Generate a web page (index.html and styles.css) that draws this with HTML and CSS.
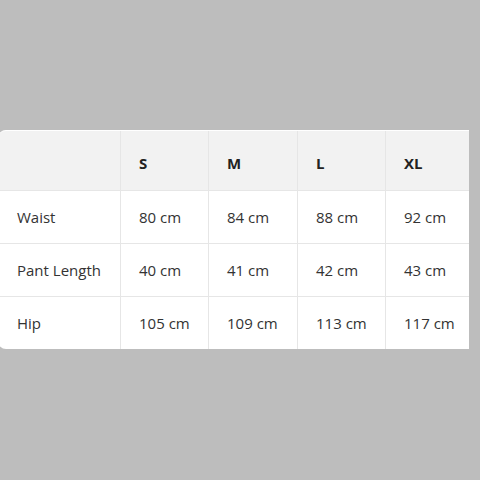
FILE: index.html
```html
<!DOCTYPE html>
<html lang="en">
<head>
<meta charset="utf-8">
<title>Size chart</title>
<link rel="stylesheet" href="styles.css">
</head>
<body>
<div class="card">
  <table class="size-table">
    <colgroup>
      <col class="c-label">
      <col class="c-s">
      <col class="c-m">
      <col class="c-l">
      <col class="c-xl">
    </colgroup>
    <thead>
      <tr>
        <th></th>
        <th>S</th>
        <th>M</th>
        <th>L</th>
        <th>XL</th>
      </tr>
    </thead>
    <tbody>
      <tr>
        <td>Waist</td>
        <td>80 cm</td>
        <td>84 cm</td>
        <td>88 cm</td>
        <td>92 cm</td>
      </tr>
      <tr>
        <td>Pant Length</td>
        <td>40 cm</td>
        <td>41 cm</td>
        <td>42 cm</td>
        <td>43 cm</td>
      </tr>
      <tr>
        <td>Hip</td>
        <td>105 cm</td>
        <td>109 cm</td>
        <td>113 cm</td>
        <td>117 cm</td>
      </tr>
    </tbody>
  </table>
</div>
</body>
</html>
```

FILE: styles.css
```css
html, body {
  margin: 0;
  padding: 0;
  background: #bdbdbd;
}

body {
  padding-top: 130px;
  font-family: "Open Sans", "Noto Sans", "Liberation Sans", sans-serif;
  font-size: 15px;
  color: #333333;
}

.card {
  margin-left: -2px;
  width: 471px;
  background: #ffffff;
  border-top: 1px solid #ffffff;
  border-radius: 8px 0 0 8px;
  overflow: hidden;
}

.size-table {
  border-collapse: separate;
  border-spacing: 0;
  table-layout: fixed;
  width: 471px;
}

.c-label { width: 123px; }
.c-s { width: 88px; }
.c-m { width: 89px; }
.c-l { width: 88px; }
.c-xl { width: 83px; }

.size-table th,
.size-table td {
  box-sizing: border-box;
  text-align: left;
  line-height: 20px;
  padding: 16px 10px 16px 18px;
  border-right: 1px solid #e6e6e6;
  border-bottom: 1px solid #e6e6e6;
  white-space: nowrap;
}

.size-table th {
  background: #f2f2f2;
  font-weight: 700;
  color: #222222;
  line-height: 21px;
  padding-top: 22px;
  padding-bottom: 16px;
}

.size-table th:first-child,
.size-table td:first-child {
  padding-left: 19px;
}

.size-table th:last-child,
.size-table td:last-child {
  border-right: none;
}

.size-table tbody tr:last-child td {
  border-bottom: none;
}
```
